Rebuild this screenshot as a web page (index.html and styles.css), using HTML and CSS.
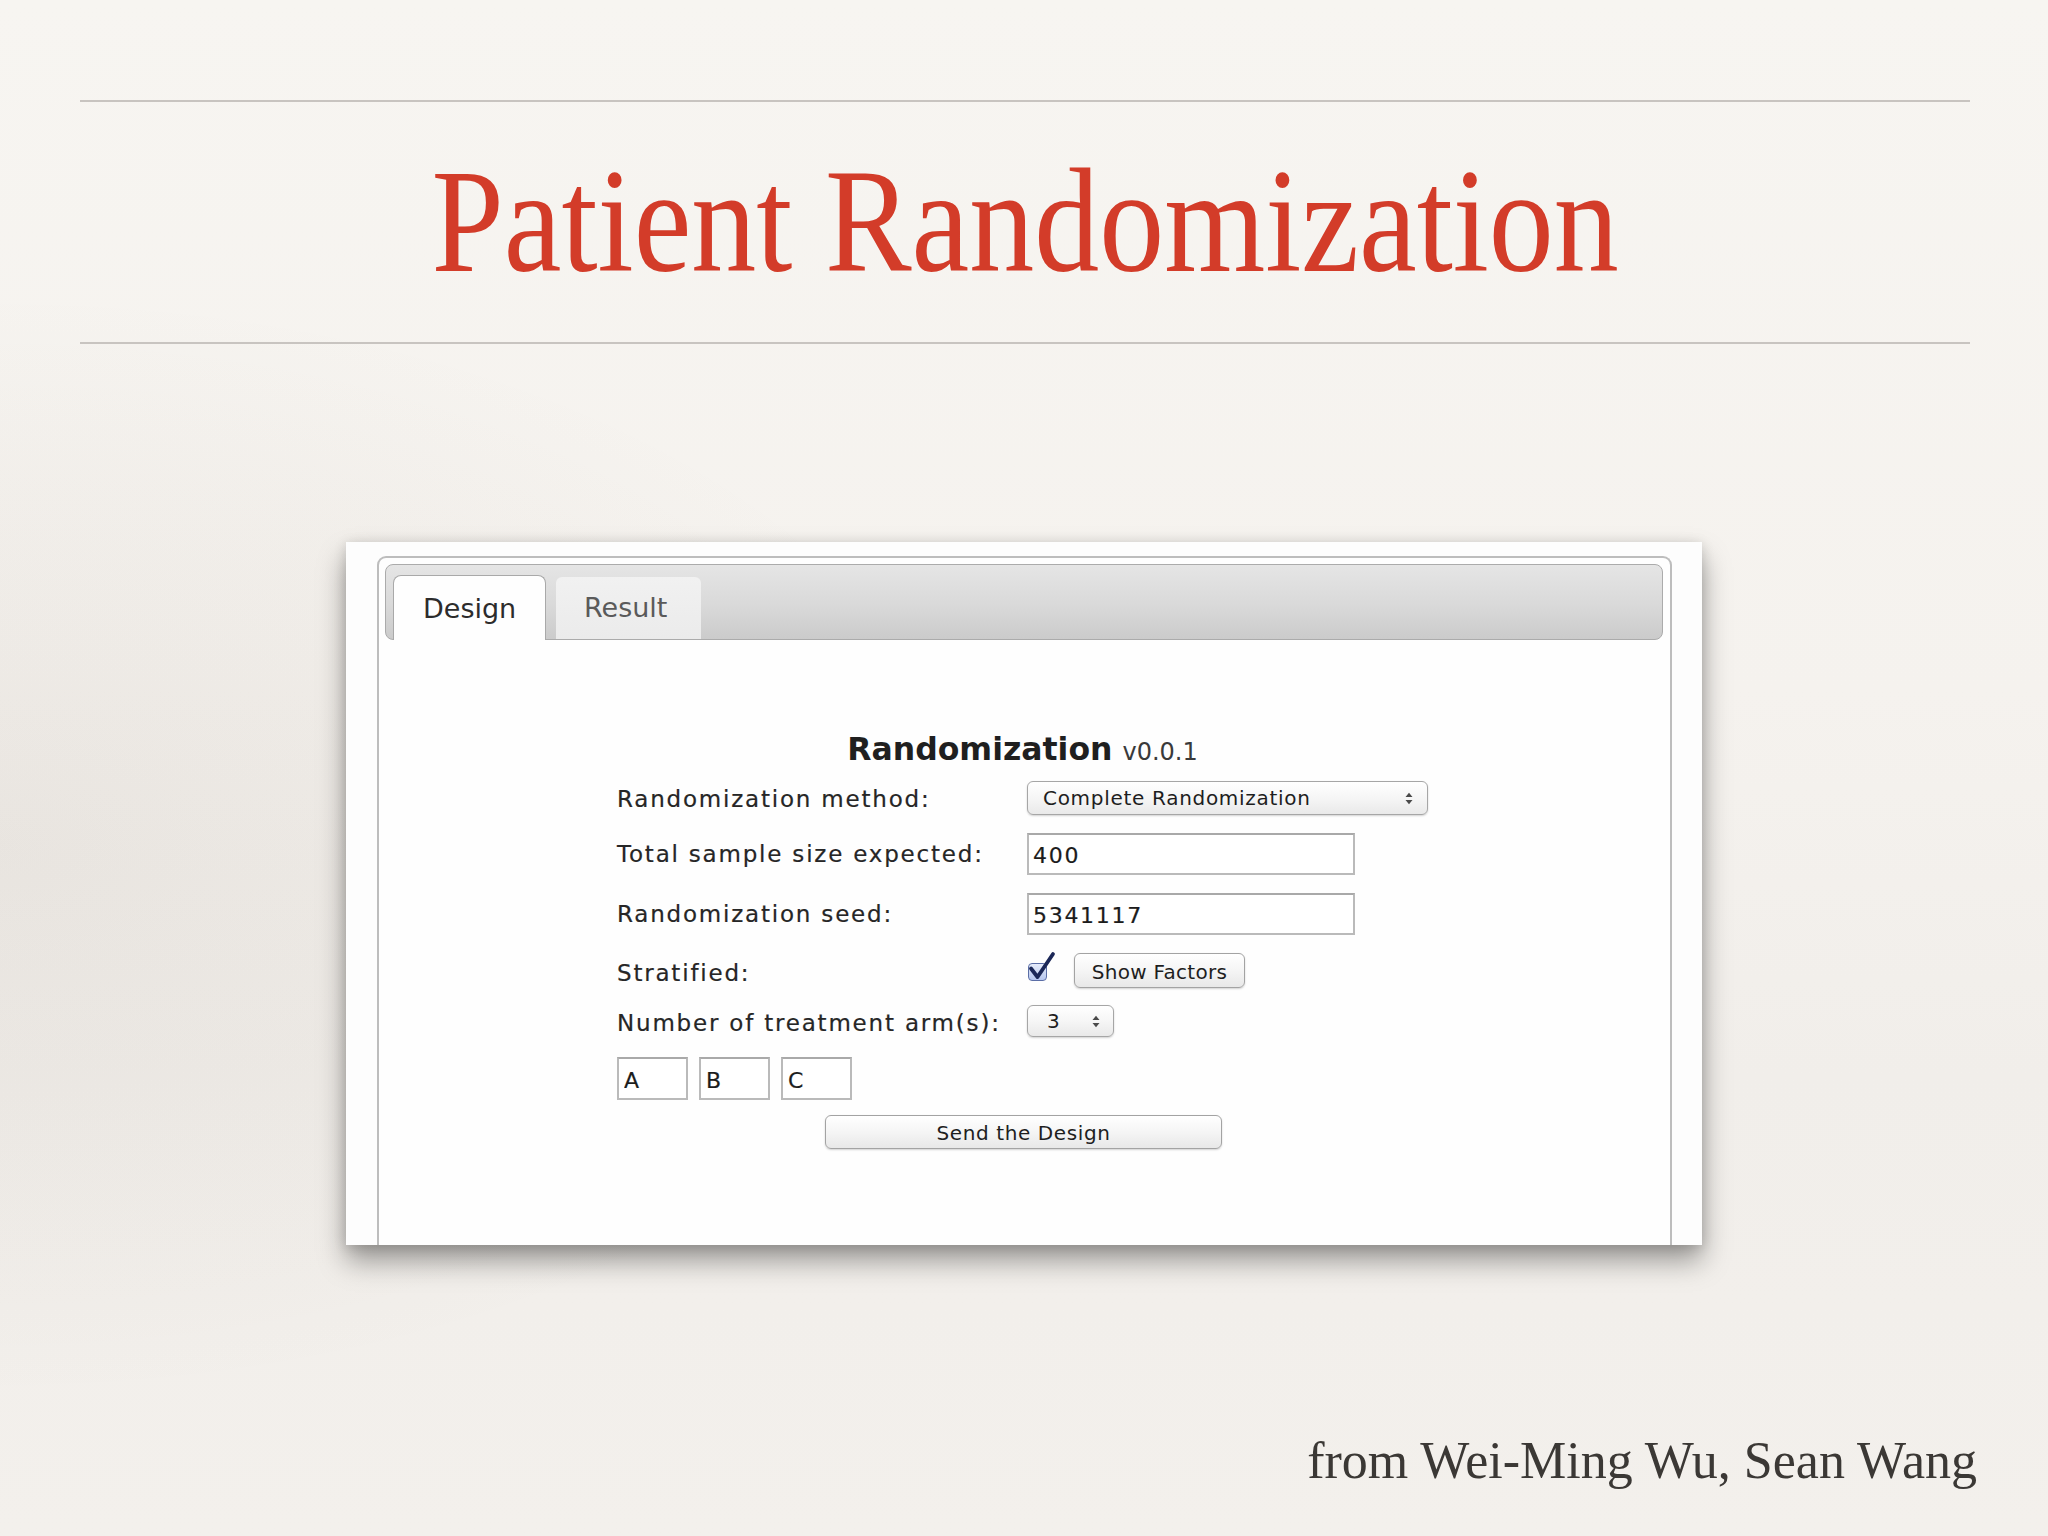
FILE: index.html
```html
<!DOCTYPE html>
<html lang="en">
<head>
<meta charset="utf-8">
<title>Patient Randomization</title>
<link rel="stylesheet" href="styles.css">
</head>
<body>
<div class="slide">
  <div class="rule"></div>
  <h1 class="title"><span>Patient Randomization</span></h1>
  <div class="rule"></div>

  <div class="panel">
    <div class="tabset">
      <div class="tabbar">
        <div class="tab tab-active">Design</div>
        <div class="tab tab-idle">Result</div>
      </div>

      <div class="form">
        <div class="heading"><b>Randomization</b> <span class="ver">v0.0.1</span></div>

        <div class="row row-1">
          <span class="label">Randomization method:</span>
          <div class="select select-wide">
            <span>Complete Randomization</span>
            <svg class="updown" width="8" height="13" viewBox="0 0 8 13"><path d="M0.5 5 L4 0.8 L7.5 5 Z M0.5 8 L4 12.2 L7.5 8 Z" fill="#4a4a4a"/></svg>
          </div>
        </div>

        <div class="row row-2">
          <span class="label">Total sample size expected:</span>
          <input class="text-input" type="text" value="400">
        </div>

        <div class="row row-3">
          <span class="label">Randomization seed:</span>
          <input class="text-input" type="text" value="5341117">
        </div>

        <div class="row row-4">
          <span class="label">Stratified:</span>
          <span class="checkbox">
            <svg class="check" width="28" height="30" viewBox="0 0 28 30"><path d="M3 17.5 L9.5 26 L25 3" fill="none" stroke="#1b2757" stroke-width="3.8" stroke-linecap="round" stroke-linejoin="round"/></svg>
          </span>
          <span class="button btn-factors">Show Factors</span>
        </div>

        <div class="row row-5">
          <span class="label">Number of treatment arm(s):</span>
          <div class="select select-small">
            <span>3</span>
            <svg class="updown" width="8" height="13" viewBox="0 0 8 13"><path d="M0.5 5 L4 0.8 L7.5 5 Z M0.5 8 L4 12.2 L7.5 8 Z" fill="#4a4a4a"/></svg>
          </div>
        </div>

        <div class="row row-6">
          <input class="arm-input" type="text" value="A">
          <input class="arm-input" type="text" value="B">
          <input class="arm-input" type="text" value="C">
        </div>

        <div class="row row-7">
          <span class="button btn-send">Send the Design</span>
        </div>
      </div>
    </div>
  </div>

  <p class="credit">from Wei-Ming Wu, Sean Wang</p>
</div>
</body>
</html>
```

FILE: styles.css
```css
* { box-sizing: border-box; }

html, body {
  margin: 0;
  padding: 0;
  background: #f5f2ee;
}

.slide {
  width: 2048px;
  height: 1536px;
  overflow: hidden;
  padding-top: 100px;
  background:
    radial-gradient(ellipse 1000px 560px at 0% 55%, rgba(60, 40, 20, 0.06), rgba(60, 40, 20, 0) 100%),
    linear-gradient(180deg, #f7f5f1 0%, #f5f2ee 45%, #f1eeea 70%, #f3f0ec 100%);
  font-family: "Liberation Serif", "Times New Roman", serif;
}

.rule {
  height: 2px;
  margin: 0 78px 0 80px;
  background: #c8c4c0;
}

.title {
  margin: 0 78px 0 80px;
  padding: 45px 0 47px;
  text-align: center;
  font-family: "Liberation Serif", "Times New Roman", serif;
  font-weight: normal;
  font-size: 148px;
  line-height: 148px;
  height: 240px;
  color: #d33c29;
  white-space: nowrap;
}

.title span {
  display: inline-block;
  transform: scaleX(0.878);
  transform-origin: center;
}

/* ---------- screenshot panel ---------- */
.panel {
  width: 1356px;
  height: 703px;
  margin: 198px auto 0;
  background: #fdfdfd;
  overflow: hidden;
  padding: 14px 0 0 31px;
  box-shadow: 0 16px 26px rgba(0, 0, 0, 0.36), 0 2px 12px rgba(0, 0, 0, 0.14);
  font-family: "DejaVu Sans", Verdana, sans-serif;
  color: #2f2f2f;
}

.tabset {
  width: 1295px;
  height: 720px;
  border: 2px solid #bdbdbd;
  border-bottom: none;
  border-radius: 9px 9px 0 0;
  padding: 6px 7px 0 6px;
  background: #fefefe;
}

.tabbar {
  height: 76px;
  border: 1px solid #ababab;
  border-radius: 8px;
  background: linear-gradient(180deg, #e5e5e5 0%, #d9d9d9 55%, #cbcbcb 100%);
  display: flex;
  align-items: flex-end;
  padding-left: 7px;
  gap: 10px;
}

.tab {
  font-size: 27px;
  line-height: 32px;
  white-space: nowrap;
}

.tab-active {
  width: 153px;
  height: 65px;
  margin-bottom: -1px;
  padding: 17px 0 0 29px;
  background: #fefefe;
  border: 1px solid #a9a9a9;
  border-bottom: none;
  border-radius: 8px 8px 0 0;
  color: #2c2c2c;
}

.tab-idle {
  width: 145px;
  height: 62px;
  padding: 15px 0 0 28px;
  background: linear-gradient(180deg, #f1f1f1, #ebebeb);
  border-radius: 6px 6px 0 0;
  color: #5a5a5a;
}

/* ---------- form ---------- */
.form {
  width: 811px;
  margin-left: 232px;
  display: flex;
  flex-direction: column;
}

.heading {
  margin-top: 91px;
  height: 36px;
  text-align: center;
  font-size: 31.5px;
  line-height: 36px;
  color: #1f1f1f;
  white-space: nowrap;
}

.heading b { font-weight: bold; }

.heading .ver {
  font-size: 24px;
  line-height: 1;
  font-weight: normal;
  color: #3a3a3a;
}

.row {
  display: flex;
  align-items: center;
}

.label {
  width: 410px;
  flex: none;
  font-size: 23px;
  line-height: 26px;
  letter-spacing: 1.8px;
  white-space: nowrap;
  color: #262626;
  -webkit-text-stroke: 0.2px #262626;
}

.row-1 { margin-top: 14px; height: 34px; }
.row-1 .label { margin-top: 2px; }
.row-2 { margin-top: 18px; height: 42px; }
.row-3 { margin-top: 18px; height: 42px; }
.row-4 { margin-top: 17px; height: 36px; }
.row-4 .label { margin-top: 6px; }
.row-5 { margin-top: 17px; height: 32px; }
.row-5 .label { margin-top: 3px; }
.row-6 { margin-top: 20px; height: 43px; gap: 11px; }
.row-7 { margin-top: 15px; height: 34px; }

.select {
  display: flex;
  align-items: center;
  justify-content: space-between;
  border: 1px solid #a6a6a6;
  border-radius: 6px;
  background: linear-gradient(180deg, #ffffff 0%, #f6f6f6 50%, #e9e9e9 100%);
  box-shadow: 0 1px 2px rgba(0, 0, 0, 0.18);
  font-size: 20px;
  letter-spacing: 0.7px;
  color: #1e1e1e;
  white-space: nowrap;
}

.select-wide {
  width: 401px;
  height: 34px;
  padding: 0 14px 0 15px;
}

.select-small {
  width: 87px;
  height: 32px;
  padding: 0 13px 0 19px;
}

.updown { flex: none; display: block; }

.text-input,
.arm-input {
  font-family: "DejaVu Sans", Verdana, sans-serif;
  font-size: 22px;
  letter-spacing: 1.7px;
  color: #1c1c1c;
  background: #ffffff;
  border: 2px solid #bababa;
  border-top-color: #a9a9a9;
  border-radius: 0;
  margin: 0;
  outline: none;
  -webkit-text-stroke: 0.2px #1c1c1c;
}

.text-input {
  width: 328px;
  height: 42px;
  padding: 3px 0 0 4px;
}

.arm-input {
  width: 71px;
  height: 43px;
  padding: 3px 0 0 5px;
}

.checkbox {
  position: relative;
  width: 19px;
  height: 18px;
  margin: 3px 0 0 1px;
  flex: none;
  border: 1px solid #5b6ea6;
  border-radius: 4px;
  background: linear-gradient(180deg, #e6ecfb 0%, #c9d5f2 60%, #b6c6ee 100%);
}

.check {
  position: absolute;
  left: -1px;
  top: -13px;
}

.button {
  display: flex;
  align-items: center;
  justify-content: center;
  border: 1px solid #a3a3a3;
  border-radius: 6px;
  background: linear-gradient(180deg, #ffffff 0%, #f5f5f5 50%, #e8e8e8 100%);
  box-shadow: 0 1px 2px rgba(0, 0, 0, 0.18);
  font-size: 20px;
  color: #1e1e1e;
  white-space: nowrap;
}

.btn-factors {
  width: 171px;
  height: 35px;
  margin-left: 27px;
  padding-top: 3px;
  letter-spacing: 0.3px;
}

.btn-send {
  width: 397px;
  height: 34px;
  margin-left: 208px;
  padding-top: 2px;
  letter-spacing: 0.6px;
}

/* ---------- credit ---------- */
.credit {
  margin: 190px 71px 0 0;
  text-align: right;
  font-family: "Liberation Serif", "Times New Roman", serif;
  font-size: 52px;
  line-height: 52px;
  color: #3b3835;
}
```
